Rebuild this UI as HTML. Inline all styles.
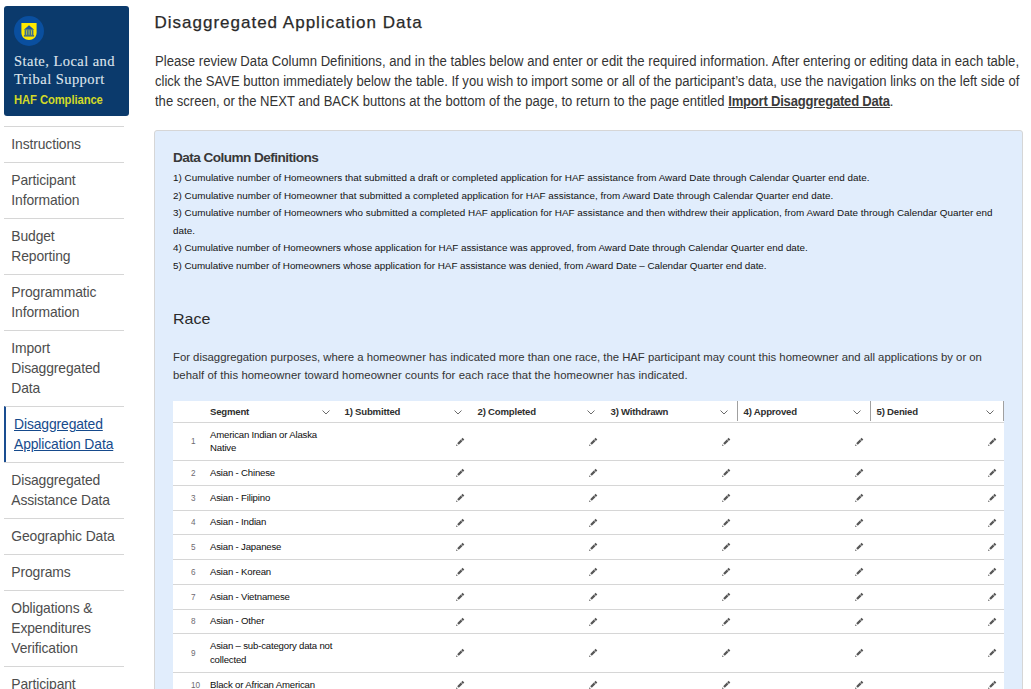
<!DOCTYPE html>
<html><head><meta charset="utf-8">
<style>
*{box-sizing:border-box;margin:0;padding:0}
html,body{width:1031px;height:689px;overflow:hidden;background:#fff}
body{font-family:"Liberation Sans",sans-serif;color:#333;position:relative}
.abs{position:absolute}
.nw{white-space:nowrap}
/* logo */
#logo{position:absolute;left:4px;top:6px;width:125px;height:110px;background:#0b3a6c;border-radius:3px}
#logo .circle{position:absolute;left:10px;top:10px;width:30px;height:30px;border-radius:50%;background:#0a4f9f}
#logo .t1{position:absolute;left:10px;top:47px;font-family:"Liberation Serif",serif;font-size:14.5px;line-height:17.7px;color:#dfe5ec;white-space:nowrap;letter-spacing:0.45px;-webkit-text-stroke:0.1px #dfe5ec}
#logo .t2{position:absolute;left:10px;top:87px;font-weight:bold;font-size:12.3px;color:#d2d928;white-space:nowrap;letter-spacing:-0.1px;transform:scaleX(0.915);transform-origin:0 0}
/* nav */
#nav{position:absolute;left:4px;top:126px;width:120px}
#nav .it{border-top:1px solid #d6d6d6;padding:7px 0 8px 7.3px;font-size:13.9px;line-height:20px;color:#4d4d4d;letter-spacing:-0.12px}
#nav .it.act{border-left:2px solid #1a4d91;padding-left:8px;color:#164a8c;text-decoration:underline}
/* main */
h1{position:absolute;left:154.5px;top:11.5px;font-size:17px;font-weight:normal;color:#2a2a2a;letter-spacing:1.0px;-webkit-text-stroke:0.25px #2a2a2a;white-space:nowrap;line-height:22px}
.intro{position:absolute;left:155px;font-size:14px;line-height:20px;color:#333;white-space:nowrap;transform:scaleX(0.9366);transform-origin:0 0}
.intro b{text-decoration:underline;letter-spacing:-0.22px;color:#3a3a3a}
#panel{position:absolute;left:154px;top:130px;width:869px;height:600px;background:#e1edfc;border:1px solid #d6d6d6;border-radius:3px}
.dct{position:absolute;left:18px;top:18.5px;font-size:13.6px;font-weight:bold;color:#383838;white-space:nowrap;letter-spacing:-0.55px}
.defs{position:absolute;left:18px;top:38px;font-size:9.87px;line-height:17.56px;color:#111;white-space:nowrap;letter-spacing:0.012px}
.race{position:absolute;left:18px;top:179.5px;font-size:14.6px;letter-spacing:0;transform:scaleX(1.1);transform-origin:0 0;color:#2a2a2a;white-space:nowrap}
.rp{position:absolute;left:18px;font-size:11.35px;line-height:17.9px;color:#333;white-space:nowrap}
/* table */
#tbl{position:absolute;left:173px;top:401px;width:831px;background:#fff}
.row{position:relative;border-bottom:1px solid #d6d6d6}
.hd{position:absolute;top:5px;font-size:9.6px;font-weight:bold;color:#2e2e2e;white-space:nowrap;line-height:12px;letter-spacing:-0.2px}
.seg{position:absolute;left:37px;top:0;bottom:0;display:flex;align-items:center;font-size:9.6px;line-height:12.5px;color:#0d0d0d;white-space:nowrap;letter-spacing:-0.18px}
.seg.hd{top:5px;bottom:auto;display:block;font-weight:bold;color:#2e2e2e;letter-spacing:-0.2px}
.num{position:absolute;left:18px;width:20px;top:0;bottom:0;display:flex;align-items:center;justify-content:flex-start;font-size:8.2px;color:#6e6a70}
.chv{position:absolute;top:9px;width:8px;height:5px;line-height:0}
.vd{position:absolute;top:0;width:1px;height:20px;background:#a0a0a0}
.pw{position:absolute;top:0;bottom:0;width:10px;display:flex;align-items:center;line-height:0}
svg{display:block}
</style></head><body>

<div id="logo">
  <svg class="abs" style="left:10px;top:10px" width="30" height="30" viewBox="0 0 30 30"><circle cx="15" cy="15" r="15" fill="#0a4f9f"/><path d="M7.4 7 H22.6 V16.6 C22.6 21.2 19.2 24.1 15 24.1 C10.8 24.1 7.4 21.2 7.4 16.6 Z" fill="#ffe900"/><path d="M9.8 13.8 L15 9.3 L20.2 13.8 Z" fill="#1c55a0"/><rect x="10.6" y="14.1" width="8.8" height="4.9" fill="#3d6f8f"/><rect x="12.2" y="14.3" width="0.9" height="4.5" fill="#c9cf3a"/><rect x="14.6" y="14.3" width="0.9" height="4.5" fill="#c9cf3a"/><rect x="17" y="14.3" width="0.9" height="4.5" fill="#c9cf3a"/><rect x="9.9" y="19.2" width="10.2" height="1.3" fill="#1c55a0"/></svg>
  <div class="t1">State, Local and<br>Tribal Support</div>
  <div class="t2">HAF Compliance</div>
</div>

<div id="nav">
  <div class="it">Instructions</div>
  <div class="it">Participant<br>Information</div>
  <div class="it">Budget<br>Reporting</div>
  <div class="it">Programmatic<br>Information</div>
  <div class="it">Import<br>Disaggregated<br>Data</div>
  <div class="it act">Disaggregated<br>Application Data</div>
  <div class="it">Disaggregated<br>Assistance Data</div>
  <div class="it">Geographic Data</div>
  <div class="it">Programs</div>
  <div class="it">Obligations &amp;<br>Expenditures<br>Verification</div>
  <div class="it">Participant<br>Compliance</div>
</div>

<h1>Disaggregated Application Data</h1>
<div class="intro" style="top:50.5px;transform:scaleX(0.9377)">Please review Data Column Definitions, and in the tables below and enter or edit the required information. After entering or editing data in each table,</div>
<div class="intro" style="top:70.5px;transform:scaleX(0.9323)">click the SAVE button immediately below the table. If you wish to import some or all of the participant’s data, use the navigation links on the left side of</div>
<div class="intro" style="top:90.5px;transform:scaleX(0.9315)">the screen, or the NEXT and BACK buttons at the bottom of the page, to return to the page entitled <b>Import Disaggregated Data</b>.</div>

<div id="panel">
  <div class="dct">Data Column Definitions</div>
  <div class="defs">1) Cumulative number of Homeowners that submitted a draft or completed application for HAF assistance from Award Date through Calendar Quarter end date.<br>2) Cumulative number of Homeowner that submitted a completed application for HAF assistance, from Award Date through Calendar Quarter end date.<br>3) Cumulative number of Homeowners who submitted a completed HAF application for HAF assistance and then withdrew their application, from Award Date through Calendar Quarter end<br>date.<br><span style="letter-spacing:-0.022px">4) Cumulative number of Homeowners whose application for HAF assistance was approved, from Award Date through Calendar Quarter end date.</span><br><span style="letter-spacing:-0.037px">5) Cumulative number of Homeowners whose application for HAF assistance was denied, from Award Date – Calendar Quarter end date.</span></div>
  <div class="race">Race</div>
  <div class="rp" style="top:217.7px;letter-spacing:-0.013px">For disaggregation purposes, where a homeowner has indicated more than one race, the HAF participant may count this homeowner and all applications by or on</div>
  <div class="rp" style="top:235.6px;letter-spacing:0.06px">behalf of this homeowner toward homeowner counts for each race that the homeowner has indicated.</div>
</div>

<div id="tbl">
<div class="row h" style="height:22px">
<div class="seg hd">Segment</div><div class="chv" style="left:149.3px"><svg width="8" height="5" viewBox="0 0 8 5"><path d="M0.5 0.5 L4 4 L7.5 0.5" fill="none" stroke="#6b6b6b" stroke-width="1"/></svg></div>
<div class="hd" style="left:171.5px">1) Submitted</div><div class="chv" style="left:281.3px"><svg width="8" height="5" viewBox="0 0 8 5"><path d="M0.5 0.5 L4 4 L7.5 0.5" fill="none" stroke="#6b6b6b" stroke-width="1"/></svg></div>
<div class="hd" style="left:304.5px">2) Completed</div><div class="chv" style="left:414.3px"><svg width="8" height="5" viewBox="0 0 8 5"><path d="M0.5 0.5 L4 4 L7.5 0.5" fill="none" stroke="#6b6b6b" stroke-width="1"/></svg></div>
<div class="hd" style="left:437.5px">3) Withdrawn</div><div class="chv" style="left:547.3px"><svg width="8" height="5" viewBox="0 0 8 5"><path d="M0.5 0.5 L4 4 L7.5 0.5" fill="none" stroke="#6b6b6b" stroke-width="1"/></svg></div>
<div class="vd" style="left:564.0px"></div>
<div class="hd" style="left:570.5px">4) Approved</div><div class="chv" style="left:680.3px"><svg width="8" height="5" viewBox="0 0 8 5"><path d="M0.5 0.5 L4 4 L7.5 0.5" fill="none" stroke="#6b6b6b" stroke-width="1"/></svg></div>
<div class="vd" style="left:697.0px"></div>
<div class="hd" style="left:703.5px">5) Denied</div><div class="chv" style="left:813.3px"><svg width="8" height="5" viewBox="0 0 8 5"><path d="M0.5 0.5 L4 4 L7.5 0.5" fill="none" stroke="#6b6b6b" stroke-width="1"/></svg></div>
<div class="vd" style="left:830.0px"></div>
</div>
<div class="row" style="height:38px"><div class="num">1</div><div class="seg">American Indian or Alaska<br>Native</div>
<div class="pw" style="left:281.9px"><svg width="10" height="10" viewBox="0 0 10 10"><path d="M1.0 9.0 L1.6 7.2 L2.8 8.4 Z M2.2 6.2 L5.8 2.6 L7.4 4.2 L3.8 7.8 Z M6.2 2.2 L7.6 0.8 L9.3 2.5 L7.9 3.9 Z" fill="#575757"/></svg></div>
<div class="pw" style="left:414.9px"><svg width="10" height="10" viewBox="0 0 10 10"><path d="M1.0 9.0 L1.6 7.2 L2.8 8.4 Z M2.2 6.2 L5.8 2.6 L7.4 4.2 L3.8 7.8 Z M6.2 2.2 L7.6 0.8 L9.3 2.5 L7.9 3.9 Z" fill="#575757"/></svg></div>
<div class="pw" style="left:547.9px"><svg width="10" height="10" viewBox="0 0 10 10"><path d="M1.0 9.0 L1.6 7.2 L2.8 8.4 Z M2.2 6.2 L5.8 2.6 L7.4 4.2 L3.8 7.8 Z M6.2 2.2 L7.6 0.8 L9.3 2.5 L7.9 3.9 Z" fill="#575757"/></svg></div>
<div class="pw" style="left:680.9px"><svg width="10" height="10" viewBox="0 0 10 10"><path d="M1.0 9.0 L1.6 7.2 L2.8 8.4 Z M2.2 6.2 L5.8 2.6 L7.4 4.2 L3.8 7.8 Z M6.2 2.2 L7.6 0.8 L9.3 2.5 L7.9 3.9 Z" fill="#575757"/></svg></div>
<div class="pw" style="left:813.9px"><svg width="10" height="10" viewBox="0 0 10 10"><path d="M1.0 9.0 L1.6 7.2 L2.8 8.4 Z M2.2 6.2 L5.8 2.6 L7.4 4.2 L3.8 7.8 Z M6.2 2.2 L7.6 0.8 L9.3 2.5 L7.9 3.9 Z" fill="#575757"/></svg></div>
</div>
<div class="row" style="height:25px"><div class="num">2</div><div class="seg">Asian - Chinese</div>
<div class="pw" style="left:281.9px"><svg width="10" height="10" viewBox="0 0 10 10"><path d="M1.0 9.0 L1.6 7.2 L2.8 8.4 Z M2.2 6.2 L5.8 2.6 L7.4 4.2 L3.8 7.8 Z M6.2 2.2 L7.6 0.8 L9.3 2.5 L7.9 3.9 Z" fill="#575757"/></svg></div>
<div class="pw" style="left:414.9px"><svg width="10" height="10" viewBox="0 0 10 10"><path d="M1.0 9.0 L1.6 7.2 L2.8 8.4 Z M2.2 6.2 L5.8 2.6 L7.4 4.2 L3.8 7.8 Z M6.2 2.2 L7.6 0.8 L9.3 2.5 L7.9 3.9 Z" fill="#575757"/></svg></div>
<div class="pw" style="left:547.9px"><svg width="10" height="10" viewBox="0 0 10 10"><path d="M1.0 9.0 L1.6 7.2 L2.8 8.4 Z M2.2 6.2 L5.8 2.6 L7.4 4.2 L3.8 7.8 Z M6.2 2.2 L7.6 0.8 L9.3 2.5 L7.9 3.9 Z" fill="#575757"/></svg></div>
<div class="pw" style="left:680.9px"><svg width="10" height="10" viewBox="0 0 10 10"><path d="M1.0 9.0 L1.6 7.2 L2.8 8.4 Z M2.2 6.2 L5.8 2.6 L7.4 4.2 L3.8 7.8 Z M6.2 2.2 L7.6 0.8 L9.3 2.5 L7.9 3.9 Z" fill="#575757"/></svg></div>
<div class="pw" style="left:813.9px"><svg width="10" height="10" viewBox="0 0 10 10"><path d="M1.0 9.0 L1.6 7.2 L2.8 8.4 Z M2.2 6.2 L5.8 2.6 L7.4 4.2 L3.8 7.8 Z M6.2 2.2 L7.6 0.8 L9.3 2.5 L7.9 3.9 Z" fill="#575757"/></svg></div>
</div>
<div class="row" style="height:25px"><div class="num">3</div><div class="seg">Asian - Filipino</div>
<div class="pw" style="left:281.9px"><svg width="10" height="10" viewBox="0 0 10 10"><path d="M1.0 9.0 L1.6 7.2 L2.8 8.4 Z M2.2 6.2 L5.8 2.6 L7.4 4.2 L3.8 7.8 Z M6.2 2.2 L7.6 0.8 L9.3 2.5 L7.9 3.9 Z" fill="#575757"/></svg></div>
<div class="pw" style="left:414.9px"><svg width="10" height="10" viewBox="0 0 10 10"><path d="M1.0 9.0 L1.6 7.2 L2.8 8.4 Z M2.2 6.2 L5.8 2.6 L7.4 4.2 L3.8 7.8 Z M6.2 2.2 L7.6 0.8 L9.3 2.5 L7.9 3.9 Z" fill="#575757"/></svg></div>
<div class="pw" style="left:547.9px"><svg width="10" height="10" viewBox="0 0 10 10"><path d="M1.0 9.0 L1.6 7.2 L2.8 8.4 Z M2.2 6.2 L5.8 2.6 L7.4 4.2 L3.8 7.8 Z M6.2 2.2 L7.6 0.8 L9.3 2.5 L7.9 3.9 Z" fill="#575757"/></svg></div>
<div class="pw" style="left:680.9px"><svg width="10" height="10" viewBox="0 0 10 10"><path d="M1.0 9.0 L1.6 7.2 L2.8 8.4 Z M2.2 6.2 L5.8 2.6 L7.4 4.2 L3.8 7.8 Z M6.2 2.2 L7.6 0.8 L9.3 2.5 L7.9 3.9 Z" fill="#575757"/></svg></div>
<div class="pw" style="left:813.9px"><svg width="10" height="10" viewBox="0 0 10 10"><path d="M1.0 9.0 L1.6 7.2 L2.8 8.4 Z M2.2 6.2 L5.8 2.6 L7.4 4.2 L3.8 7.8 Z M6.2 2.2 L7.6 0.8 L9.3 2.5 L7.9 3.9 Z" fill="#575757"/></svg></div>
</div>
<div class="row" style="height:24px"><div class="num">4</div><div class="seg">Asian - Indian</div>
<div class="pw" style="left:281.9px"><svg width="10" height="10" viewBox="0 0 10 10"><path d="M1.0 9.0 L1.6 7.2 L2.8 8.4 Z M2.2 6.2 L5.8 2.6 L7.4 4.2 L3.8 7.8 Z M6.2 2.2 L7.6 0.8 L9.3 2.5 L7.9 3.9 Z" fill="#575757"/></svg></div>
<div class="pw" style="left:414.9px"><svg width="10" height="10" viewBox="0 0 10 10"><path d="M1.0 9.0 L1.6 7.2 L2.8 8.4 Z M2.2 6.2 L5.8 2.6 L7.4 4.2 L3.8 7.8 Z M6.2 2.2 L7.6 0.8 L9.3 2.5 L7.9 3.9 Z" fill="#575757"/></svg></div>
<div class="pw" style="left:547.9px"><svg width="10" height="10" viewBox="0 0 10 10"><path d="M1.0 9.0 L1.6 7.2 L2.8 8.4 Z M2.2 6.2 L5.8 2.6 L7.4 4.2 L3.8 7.8 Z M6.2 2.2 L7.6 0.8 L9.3 2.5 L7.9 3.9 Z" fill="#575757"/></svg></div>
<div class="pw" style="left:680.9px"><svg width="10" height="10" viewBox="0 0 10 10"><path d="M1.0 9.0 L1.6 7.2 L2.8 8.4 Z M2.2 6.2 L5.8 2.6 L7.4 4.2 L3.8 7.8 Z M6.2 2.2 L7.6 0.8 L9.3 2.5 L7.9 3.9 Z" fill="#575757"/></svg></div>
<div class="pw" style="left:813.9px"><svg width="10" height="10" viewBox="0 0 10 10"><path d="M1.0 9.0 L1.6 7.2 L2.8 8.4 Z M2.2 6.2 L5.8 2.6 L7.4 4.2 L3.8 7.8 Z M6.2 2.2 L7.6 0.8 L9.3 2.5 L7.9 3.9 Z" fill="#575757"/></svg></div>
</div>
<div class="row" style="height:25px"><div class="num">5</div><div class="seg">Asian - Japanese</div>
<div class="pw" style="left:281.9px"><svg width="10" height="10" viewBox="0 0 10 10"><path d="M1.0 9.0 L1.6 7.2 L2.8 8.4 Z M2.2 6.2 L5.8 2.6 L7.4 4.2 L3.8 7.8 Z M6.2 2.2 L7.6 0.8 L9.3 2.5 L7.9 3.9 Z" fill="#575757"/></svg></div>
<div class="pw" style="left:414.9px"><svg width="10" height="10" viewBox="0 0 10 10"><path d="M1.0 9.0 L1.6 7.2 L2.8 8.4 Z M2.2 6.2 L5.8 2.6 L7.4 4.2 L3.8 7.8 Z M6.2 2.2 L7.6 0.8 L9.3 2.5 L7.9 3.9 Z" fill="#575757"/></svg></div>
<div class="pw" style="left:547.9px"><svg width="10" height="10" viewBox="0 0 10 10"><path d="M1.0 9.0 L1.6 7.2 L2.8 8.4 Z M2.2 6.2 L5.8 2.6 L7.4 4.2 L3.8 7.8 Z M6.2 2.2 L7.6 0.8 L9.3 2.5 L7.9 3.9 Z" fill="#575757"/></svg></div>
<div class="pw" style="left:680.9px"><svg width="10" height="10" viewBox="0 0 10 10"><path d="M1.0 9.0 L1.6 7.2 L2.8 8.4 Z M2.2 6.2 L5.8 2.6 L7.4 4.2 L3.8 7.8 Z M6.2 2.2 L7.6 0.8 L9.3 2.5 L7.9 3.9 Z" fill="#575757"/></svg></div>
<div class="pw" style="left:813.9px"><svg width="10" height="10" viewBox="0 0 10 10"><path d="M1.0 9.0 L1.6 7.2 L2.8 8.4 Z M2.2 6.2 L5.8 2.6 L7.4 4.2 L3.8 7.8 Z M6.2 2.2 L7.6 0.8 L9.3 2.5 L7.9 3.9 Z" fill="#575757"/></svg></div>
</div>
<div class="row" style="height:25px"><div class="num">6</div><div class="seg">Asian - Korean</div>
<div class="pw" style="left:281.9px"><svg width="10" height="10" viewBox="0 0 10 10"><path d="M1.0 9.0 L1.6 7.2 L2.8 8.4 Z M2.2 6.2 L5.8 2.6 L7.4 4.2 L3.8 7.8 Z M6.2 2.2 L7.6 0.8 L9.3 2.5 L7.9 3.9 Z" fill="#575757"/></svg></div>
<div class="pw" style="left:414.9px"><svg width="10" height="10" viewBox="0 0 10 10"><path d="M1.0 9.0 L1.6 7.2 L2.8 8.4 Z M2.2 6.2 L5.8 2.6 L7.4 4.2 L3.8 7.8 Z M6.2 2.2 L7.6 0.8 L9.3 2.5 L7.9 3.9 Z" fill="#575757"/></svg></div>
<div class="pw" style="left:547.9px"><svg width="10" height="10" viewBox="0 0 10 10"><path d="M1.0 9.0 L1.6 7.2 L2.8 8.4 Z M2.2 6.2 L5.8 2.6 L7.4 4.2 L3.8 7.8 Z M6.2 2.2 L7.6 0.8 L9.3 2.5 L7.9 3.9 Z" fill="#575757"/></svg></div>
<div class="pw" style="left:680.9px"><svg width="10" height="10" viewBox="0 0 10 10"><path d="M1.0 9.0 L1.6 7.2 L2.8 8.4 Z M2.2 6.2 L5.8 2.6 L7.4 4.2 L3.8 7.8 Z M6.2 2.2 L7.6 0.8 L9.3 2.5 L7.9 3.9 Z" fill="#575757"/></svg></div>
<div class="pw" style="left:813.9px"><svg width="10" height="10" viewBox="0 0 10 10"><path d="M1.0 9.0 L1.6 7.2 L2.8 8.4 Z M2.2 6.2 L5.8 2.6 L7.4 4.2 L3.8 7.8 Z M6.2 2.2 L7.6 0.8 L9.3 2.5 L7.9 3.9 Z" fill="#575757"/></svg></div>
</div>
<div class="row" style="height:25px"><div class="num">7</div><div class="seg">Asian - Vietnamese</div>
<div class="pw" style="left:281.9px"><svg width="10" height="10" viewBox="0 0 10 10"><path d="M1.0 9.0 L1.6 7.2 L2.8 8.4 Z M2.2 6.2 L5.8 2.6 L7.4 4.2 L3.8 7.8 Z M6.2 2.2 L7.6 0.8 L9.3 2.5 L7.9 3.9 Z" fill="#575757"/></svg></div>
<div class="pw" style="left:414.9px"><svg width="10" height="10" viewBox="0 0 10 10"><path d="M1.0 9.0 L1.6 7.2 L2.8 8.4 Z M2.2 6.2 L5.8 2.6 L7.4 4.2 L3.8 7.8 Z M6.2 2.2 L7.6 0.8 L9.3 2.5 L7.9 3.9 Z" fill="#575757"/></svg></div>
<div class="pw" style="left:547.9px"><svg width="10" height="10" viewBox="0 0 10 10"><path d="M1.0 9.0 L1.6 7.2 L2.8 8.4 Z M2.2 6.2 L5.8 2.6 L7.4 4.2 L3.8 7.8 Z M6.2 2.2 L7.6 0.8 L9.3 2.5 L7.9 3.9 Z" fill="#575757"/></svg></div>
<div class="pw" style="left:680.9px"><svg width="10" height="10" viewBox="0 0 10 10"><path d="M1.0 9.0 L1.6 7.2 L2.8 8.4 Z M2.2 6.2 L5.8 2.6 L7.4 4.2 L3.8 7.8 Z M6.2 2.2 L7.6 0.8 L9.3 2.5 L7.9 3.9 Z" fill="#575757"/></svg></div>
<div class="pw" style="left:813.9px"><svg width="10" height="10" viewBox="0 0 10 10"><path d="M1.0 9.0 L1.6 7.2 L2.8 8.4 Z M2.2 6.2 L5.8 2.6 L7.4 4.2 L3.8 7.8 Z M6.2 2.2 L7.6 0.8 L9.3 2.5 L7.9 3.9 Z" fill="#575757"/></svg></div>
</div>
<div class="row" style="height:24px"><div class="num">8</div><div class="seg">Asian - Other</div>
<div class="pw" style="left:281.9px"><svg width="10" height="10" viewBox="0 0 10 10"><path d="M1.0 9.0 L1.6 7.2 L2.8 8.4 Z M2.2 6.2 L5.8 2.6 L7.4 4.2 L3.8 7.8 Z M6.2 2.2 L7.6 0.8 L9.3 2.5 L7.9 3.9 Z" fill="#575757"/></svg></div>
<div class="pw" style="left:414.9px"><svg width="10" height="10" viewBox="0 0 10 10"><path d="M1.0 9.0 L1.6 7.2 L2.8 8.4 Z M2.2 6.2 L5.8 2.6 L7.4 4.2 L3.8 7.8 Z M6.2 2.2 L7.6 0.8 L9.3 2.5 L7.9 3.9 Z" fill="#575757"/></svg></div>
<div class="pw" style="left:547.9px"><svg width="10" height="10" viewBox="0 0 10 10"><path d="M1.0 9.0 L1.6 7.2 L2.8 8.4 Z M2.2 6.2 L5.8 2.6 L7.4 4.2 L3.8 7.8 Z M6.2 2.2 L7.6 0.8 L9.3 2.5 L7.9 3.9 Z" fill="#575757"/></svg></div>
<div class="pw" style="left:680.9px"><svg width="10" height="10" viewBox="0 0 10 10"><path d="M1.0 9.0 L1.6 7.2 L2.8 8.4 Z M2.2 6.2 L5.8 2.6 L7.4 4.2 L3.8 7.8 Z M6.2 2.2 L7.6 0.8 L9.3 2.5 L7.9 3.9 Z" fill="#575757"/></svg></div>
<div class="pw" style="left:813.9px"><svg width="10" height="10" viewBox="0 0 10 10"><path d="M1.0 9.0 L1.6 7.2 L2.8 8.4 Z M2.2 6.2 L5.8 2.6 L7.4 4.2 L3.8 7.8 Z M6.2 2.2 L7.6 0.8 L9.3 2.5 L7.9 3.9 Z" fill="#575757"/></svg></div>
</div>
<div class="row" style="height:39px"><div class="num">9</div><div class="seg" style="line-height:14px;bottom:0.5px">Asian – sub-category data not<br>collected</div>
<div class="pw" style="left:281.9px"><svg width="10" height="10" viewBox="0 0 10 10"><path d="M1.0 9.0 L1.6 7.2 L2.8 8.4 Z M2.2 6.2 L5.8 2.6 L7.4 4.2 L3.8 7.8 Z M6.2 2.2 L7.6 0.8 L9.3 2.5 L7.9 3.9 Z" fill="#575757"/></svg></div>
<div class="pw" style="left:414.9px"><svg width="10" height="10" viewBox="0 0 10 10"><path d="M1.0 9.0 L1.6 7.2 L2.8 8.4 Z M2.2 6.2 L5.8 2.6 L7.4 4.2 L3.8 7.8 Z M6.2 2.2 L7.6 0.8 L9.3 2.5 L7.9 3.9 Z" fill="#575757"/></svg></div>
<div class="pw" style="left:547.9px"><svg width="10" height="10" viewBox="0 0 10 10"><path d="M1.0 9.0 L1.6 7.2 L2.8 8.4 Z M2.2 6.2 L5.8 2.6 L7.4 4.2 L3.8 7.8 Z M6.2 2.2 L7.6 0.8 L9.3 2.5 L7.9 3.9 Z" fill="#575757"/></svg></div>
<div class="pw" style="left:680.9px"><svg width="10" height="10" viewBox="0 0 10 10"><path d="M1.0 9.0 L1.6 7.2 L2.8 8.4 Z M2.2 6.2 L5.8 2.6 L7.4 4.2 L3.8 7.8 Z M6.2 2.2 L7.6 0.8 L9.3 2.5 L7.9 3.9 Z" fill="#575757"/></svg></div>
<div class="pw" style="left:813.9px"><svg width="10" height="10" viewBox="0 0 10 10"><path d="M1.0 9.0 L1.6 7.2 L2.8 8.4 Z M2.2 6.2 L5.8 2.6 L7.4 4.2 L3.8 7.8 Z M6.2 2.2 L7.6 0.8 L9.3 2.5 L7.9 3.9 Z" fill="#575757"/></svg></div>
</div>
<div class="row" style="height:25px"><div class="num">10</div><div class="seg">Black or African American</div>
<div class="pw" style="left:281.9px"><svg width="10" height="10" viewBox="0 0 10 10"><path d="M1.0 9.0 L1.6 7.2 L2.8 8.4 Z M2.2 6.2 L5.8 2.6 L7.4 4.2 L3.8 7.8 Z M6.2 2.2 L7.6 0.8 L9.3 2.5 L7.9 3.9 Z" fill="#575757"/></svg></div>
<div class="pw" style="left:414.9px"><svg width="10" height="10" viewBox="0 0 10 10"><path d="M1.0 9.0 L1.6 7.2 L2.8 8.4 Z M2.2 6.2 L5.8 2.6 L7.4 4.2 L3.8 7.8 Z M6.2 2.2 L7.6 0.8 L9.3 2.5 L7.9 3.9 Z" fill="#575757"/></svg></div>
<div class="pw" style="left:547.9px"><svg width="10" height="10" viewBox="0 0 10 10"><path d="M1.0 9.0 L1.6 7.2 L2.8 8.4 Z M2.2 6.2 L5.8 2.6 L7.4 4.2 L3.8 7.8 Z M6.2 2.2 L7.6 0.8 L9.3 2.5 L7.9 3.9 Z" fill="#575757"/></svg></div>
<div class="pw" style="left:680.9px"><svg width="10" height="10" viewBox="0 0 10 10"><path d="M1.0 9.0 L1.6 7.2 L2.8 8.4 Z M2.2 6.2 L5.8 2.6 L7.4 4.2 L3.8 7.8 Z M6.2 2.2 L7.6 0.8 L9.3 2.5 L7.9 3.9 Z" fill="#575757"/></svg></div>
<div class="pw" style="left:813.9px"><svg width="10" height="10" viewBox="0 0 10 10"><path d="M1.0 9.0 L1.6 7.2 L2.8 8.4 Z M2.2 6.2 L5.8 2.6 L7.4 4.2 L3.8 7.8 Z M6.2 2.2 L7.6 0.8 L9.3 2.5 L7.9 3.9 Z" fill="#575757"/></svg></div>
</div>
<div class="row" style="height:39px"><div class="num">11</div><div class="seg">Native Hawaiian or Other Pacific<br>Islander</div>
<div class="pw" style="left:281.9px"><svg width="10" height="10" viewBox="0 0 10 10"><path d="M1.0 9.0 L1.6 7.2 L2.8 8.4 Z M2.2 6.2 L5.8 2.6 L7.4 4.2 L3.8 7.8 Z M6.2 2.2 L7.6 0.8 L9.3 2.5 L7.9 3.9 Z" fill="#575757"/></svg></div>
<div class="pw" style="left:414.9px"><svg width="10" height="10" viewBox="0 0 10 10"><path d="M1.0 9.0 L1.6 7.2 L2.8 8.4 Z M2.2 6.2 L5.8 2.6 L7.4 4.2 L3.8 7.8 Z M6.2 2.2 L7.6 0.8 L9.3 2.5 L7.9 3.9 Z" fill="#575757"/></svg></div>
<div class="pw" style="left:547.9px"><svg width="10" height="10" viewBox="0 0 10 10"><path d="M1.0 9.0 L1.6 7.2 L2.8 8.4 Z M2.2 6.2 L5.8 2.6 L7.4 4.2 L3.8 7.8 Z M6.2 2.2 L7.6 0.8 L9.3 2.5 L7.9 3.9 Z" fill="#575757"/></svg></div>
<div class="pw" style="left:680.9px"><svg width="10" height="10" viewBox="0 0 10 10"><path d="M1.0 9.0 L1.6 7.2 L2.8 8.4 Z M2.2 6.2 L5.8 2.6 L7.4 4.2 L3.8 7.8 Z M6.2 2.2 L7.6 0.8 L9.3 2.5 L7.9 3.9 Z" fill="#575757"/></svg></div>
<div class="pw" style="left:813.9px"><svg width="10" height="10" viewBox="0 0 10 10"><path d="M1.0 9.0 L1.6 7.2 L2.8 8.4 Z M2.2 6.2 L5.8 2.6 L7.4 4.2 L3.8 7.8 Z M6.2 2.2 L7.6 0.8 L9.3 2.5 L7.9 3.9 Z" fill="#575757"/></svg></div>
</div>
</div><!--/tbl-->

</body></html>
